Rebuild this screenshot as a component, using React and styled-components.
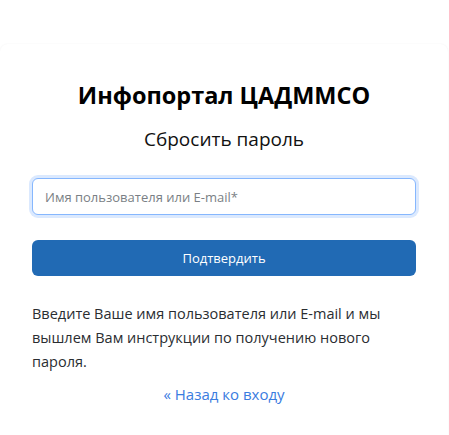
import React from "react";
import styled, { createGlobalStyle } from "styled-components";

const Global = createGlobalStyle`
  html, body { margin: 0; padding: 0; background: #ffffff; }
  body { font-family: "Open Sans", "Noto Sans", sans-serif; color: #212529; }
  * { box-sizing: border-box; }
`;

const Page = styled.div`
  padding-top: 44px;
  width: 449px;
  height: 435px;
  overflow: hidden;
`;

const Card = styled.div`
  width: 448px;
  min-height: 400px;
  background: #fff;
  border-radius: 8px;
  box-shadow: 0 0 2px rgba(0, 0, 0, 0.06);
  padding: 35px 32px 24px;
  display: flex;
  flex-direction: column;
`;

const Title = styled.h1`
  margin: 0;
  font-size: 23.5px;
  font-weight: 700;
  line-height: 32px;
  text-align: center;
  color: #000;
`;

const Subtitle = styled.h2`
  margin: 14px 0 0;
  font-size: 19px;
  font-weight: 400;
  line-height: 28px;
  text-align: center;
  color: #111;
`;

const Input = styled.input`
  margin-top: 25px;
  height: 37px;
  width: 100%;
  border: 1px solid #86b7fe;
  border-radius: 6px;
  box-shadow: 0 0 0 3px #dbe9fe;
  padding: 0 12px;
  font-family: inherit;
  font-size: 13px;
  color: #212529;
  outline: none;
  &::placeholder { color: #7a7f85; }
`;

const Button = styled.button`
  margin-top: 25px;
  height: 36px;
  width: 100%;
  border: none;
  border-radius: 6px;
  background: #216ab4;
  color: #fff;
  font-family: inherit;
  font-size: 13px;
  cursor: pointer;
`;

const Help = styled.p`
  margin: 26px 0 0;
  font-size: 14.5px;
  line-height: 24px;
  color: #2a2d31;
`;

const Back = styled.a`
  margin-top: 8px;
  align-self: center;
  font-size: 15px;
  line-height: 24px;
  color: #3a7cdf;
  text-decoration: none;
`;

export default function App() {
  return (
    <>
      <Global />
      <Page>
        <Card>
          <Title>Инфопортал ЦАДММСО</Title>
          <Subtitle>Сбросить пароль</Subtitle>
          <Input placeholder="Имя пользователя или E-mail*" />
          <Button>Подтвердить</Button>
          <Help>
            Введите Ваше имя пользователя или E-mail и мы вышлем Вам инструкции по получению нового пароля.
          </Help>
          <Back href="#">« Назад ко входу</Back>
        </Card>
      </Page>
    </>
  );
}
